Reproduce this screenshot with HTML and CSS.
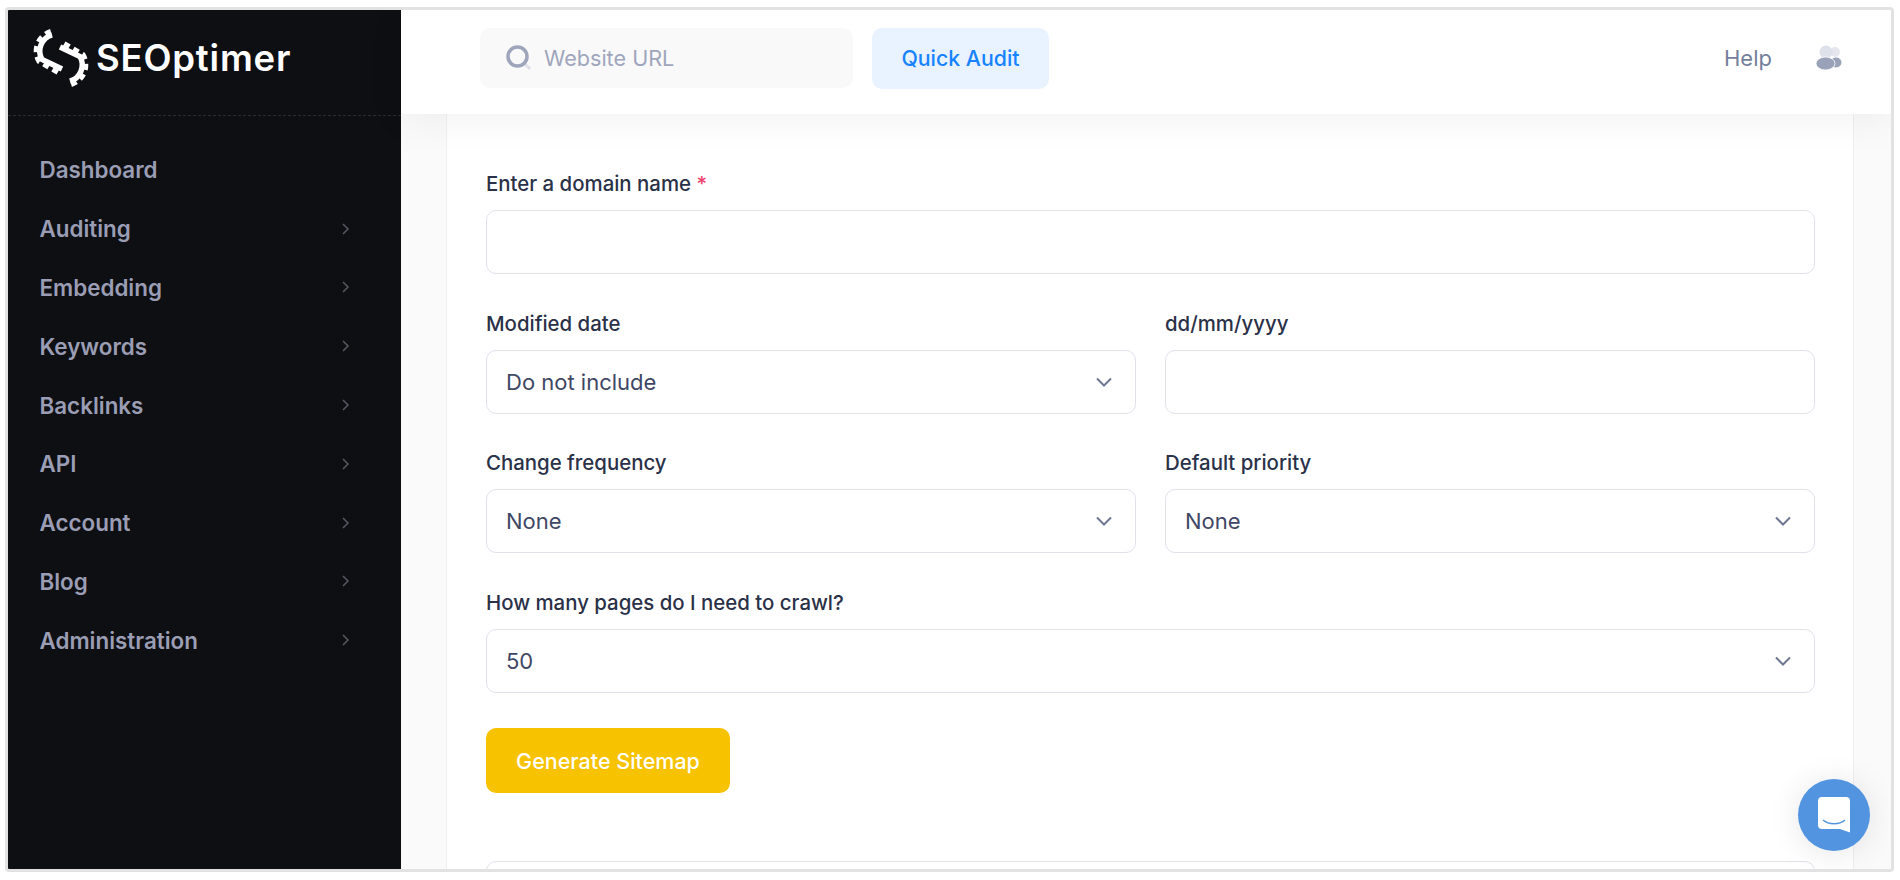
FILE: index.html
```html
<!DOCTYPE html>
<html lang="en">
<head>
<meta charset="utf-8">
<title>SEOptimer - Generate Sitemap</title>
<link rel="stylesheet" href="styles.css">
</head>
<body>
<div class="frame">
  <aside class="sidebar">
    <div class="brand">
      <svg class="brand-icon" viewBox="33 29 56 58" aria-hidden="true">
        <g>
          <path class="gear-body" d="M52 34.800A17 17 0 0 0 42 59.500L62 69"/>
          <path class="gear-teeth" d="M50.800 31.500A20.500 20.500 0 0 0 39 61.500L58 72.500"/>
        </g>
        <g transform="rotate(180 61 58)">
          <path class="gear-body" d="M52 34.800A17 17 0 0 0 42 59.500L62 69"/>
          <path class="gear-teeth" d="M50.800 31.500A20.500 20.500 0 0 0 39 61.500L58 72.500"/>
        </g>
      </svg>
      <span class="brand-name">SEOptimer</span>
    </div>
    <nav class="nav">
      <a class="nav-item">Dashboard</a>
      <a class="nav-item">Auditing<svg class="nav-chev" viewBox="0 0 10 14"><path d="M2 2l5 5-5 5"/></svg></a>
      <a class="nav-item">Embedding<svg class="nav-chev" viewBox="0 0 10 14"><path d="M2 2l5 5-5 5"/></svg></a>
      <a class="nav-item">Keywords<svg class="nav-chev" viewBox="0 0 10 14"><path d="M2 2l5 5-5 5"/></svg></a>
      <a class="nav-item">Backlinks<svg class="nav-chev" viewBox="0 0 10 14"><path d="M2 2l5 5-5 5"/></svg></a>
      <a class="nav-item">API<svg class="nav-chev" viewBox="0 0 10 14"><path d="M2 2l5 5-5 5"/></svg></a>
      <a class="nav-item">Account<svg class="nav-chev" viewBox="0 0 10 14"><path d="M2 2l5 5-5 5"/></svg></a>
      <a class="nav-item">Blog<svg class="nav-chev" viewBox="0 0 10 14"><path d="M2 2l5 5-5 5"/></svg></a>
      <a class="nav-item">Administration<svg class="nav-chev" viewBox="0 0 10 14"><path d="M2 2l5 5-5 5"/></svg></a>
    </nav>
  </aside>
  <div class="main">
    <header class="topbar">
      <div class="search">
        <svg class="search-icon" viewBox="0 0 26 26" aria-hidden="true">
          <path class="search-handle" d="M18 18l6 6"/>
          <circle class="search-ring" cx="11.5" cy="11.5" r="9.5"/>
        </svg>
        <span class="search-text">Website URL</span>
      </div>
      <button class="audit-btn">Quick Audit</button>
      <div class="topbar-right">
        <span class="help">Help</span>
        <svg class="user-icon" viewBox="0 0 26 26" aria-hidden="true">
          <circle class="user-back" cx="19" cy="7" r="5"/>
          <ellipse class="user-back-2" cx="20" cy="17.500" rx="5.500" ry="5"/>
          <circle class="user-head" cx="10" cy="7" r="6.500"/>
          <ellipse class="user-body" cx="9.500" cy="18.500" rx="9.500" ry="6.500"/>
        </svg>
      </div>
    </header>
    <div class="content">
      <section class="card">
        <div class="field">
          <label class="label">Enter a domain name <span class="req">*</span></label>
          <input class="control" type="text">
        </div>
        <div class="grid">
          <div class="field">
            <label class="label">Modified date</label>
            <div class="select-wrap">
              <select class="control select"><option>Do not include</option></select>
              <svg class="select-chev" viewBox="0 0 18 10"><path d="M2 1.5l7 7 7-7"/></svg>
            </div>
          </div>
          <div class="field">
            <label class="label">dd/mm/yyyy</label>
            <input class="control" type="text">
          </div>
          <div class="field">
            <label class="label">Change frequency</label>
            <div class="select-wrap">
              <select class="control select"><option>None</option></select>
              <svg class="select-chev" viewBox="0 0 18 10"><path d="M2 1.5l7 7 7-7"/></svg>
            </div>
          </div>
          <div class="field">
            <label class="label">Default priority</label>
            <div class="select-wrap">
              <select class="control select"><option>None</option></select>
              <svg class="select-chev" viewBox="0 0 18 10"><path d="M2 1.5l7 7 7-7"/></svg>
            </div>
          </div>
        </div>
        <div class="field">
          <label class="label">How many pages do I need to crawl?</label>
          <div class="select-wrap">
            <select class="control select"><option>50</option></select>
            <svg class="select-chev" viewBox="0 0 18 10"><path d="M2 1.5l7 7 7-7"/></svg>
          </div>
        </div>
        <button class="generate">Generate Sitemap</button>
        <div class="control result"></div>
      </section>
    </div>
    <button class="chat" aria-label="Chat">
      <svg class="chat-icon" viewBox="0 0 32 36">
        <path class="chat-bubble" d="M4 0H28a4 4 0 0 1 4 4V35.500L22 32H4a4 4 0 0 1-4-4V4a4 4 0 0 1 4-4z"/>
        <path class="chat-smile" d="M5 23c6 5 16 5 22 0"/>
      </svg>
    </button>
  </div>
</div>
</body>
</html>
```
FILE: styles.css
```css
* { box-sizing: border-box; }
html, body { margin: 0; height: 100%; background: #fff; overflow: hidden; }
body { padding: 7px 6px 8px 5px; font-family: Inter, "Liberation Sans", sans-serif; }

.frame {
  position: relative;
  display: flex;
  height: 865px;
  border: 3px solid #e2e2e2;
  border-radius: 4px;
  overflow: hidden;
}

.sidebar { flex: 0 0 393px; background: #0e0f13; }
.brand {
  display: flex;
  align-items: center;
  gap: 7px;
  height: 106px;
  padding: 0 0 9px 25px;
  border-bottom: 1px dashed #2a2c30;
}
.brand-icon { width: 56px; height: 58px; flex: none; }
.gear-body { fill: none; stroke: #fff; stroke-width: 5.500; }
.gear-teeth { fill: none; stroke: #fff; stroke-width: 5; stroke-dasharray: 6 4.500; }
.brand-name { font-size: 36.500px; font-weight: 600; color: #fff; letter-spacing: 0.8px; }

.nav { display: flex; flex-direction: column; padding-top: 24.500px; }
.nav-item {
  display: flex;
  align-items: center;
  justify-content: space-between;
  height: 58.800px;
  padding: 0 50px 0 31.500px;
  color: #9a9db4;
  font-size: 22.400px;
  font-weight: 600;
}
.nav-chev { width: 10px; height: 14px; }
.nav-chev path { fill: none; stroke: #55575f; stroke-width: 1.600; }

.main { position: relative; flex: 1; display: flex; flex-direction: column; min-width: 0; }
.topbar {
  position: relative;
  z-index: 1;
  flex: 0 0 104px;
  display: flex;
  align-items: center;
  gap: 19px;
  padding: 0 49px 8px 79px;
  background: #fff;
  box-shadow: 0 8px 40px rgba(0, 0, 0, 0.05);
}
.search {
  display: flex;
  align-items: center;
  gap: 12px;
  width: 373px;
  height: 60px;
  padding-left: 26px;
  background: #f9f9f9;
  border-radius: 10px;
}
.search-icon { width: 26px; height: 26px; flex: none; }
.search-ring { fill: none; stroke: #9fa6bc; stroke-width: 3.500; }
.search-handle { fill: none; stroke: #dfe1e9; stroke-width: 3; }
.search-text { color: #9fa6bc; font-size: 21.600px; }
.audit-btn {
  width: 177px;
  height: 61px;
  border: 0;
  border-radius: 10px;
  background: #e8f3ff;
  color: #1783ff;
  font: 500 21.300px Inter, sans-serif;
}
.topbar-right { display: flex; align-items: center; gap: 44px; margin-left: auto; }
.help { color: #757f9b; font-size: 22px; }
.user-icon { width: 26px; height: 26px; }
.user-back { fill: #e4e6ee; }
.user-head { fill: #dfe1ea; }
.user-back-2, .user-body { fill: #9aa2b9; }
.user-body { stroke: #fff; stroke-width: 0.800; }

.content { flex: 1; min-height: 0; overflow: hidden; padding: 0 37px 0 45px; background: #fafafa; }
.card {
  display: flex;
  flex-direction: column;
  gap: 38.670px;
  height: 100%;
  padding: 59px 38px 0 39px;
  background: #fff;
  border: solid #f0f0f3;
  border-width: 0 1px;
}
.field { display: flex; flex-direction: column; flex: none; min-width: 0; }
.grid { display: grid; grid-template-columns: 1fr 1fr; gap: 38.670px 29px; flex: none; }
.label { height: 22px; margin-bottom: 15px; color: #2a3148; font-size: 20.400px; font-weight: 500; line-height: 22px; }
.req { color: #f1416c; }
.control {
  display: block;
  width: 100%;
  height: 64px;
  flex: none;
  padding: 0 19px;
  border: 1px solid #dfe2ec;
  border-radius: 10px;
  background: #fff;
  color: #3f4765;
  font: 400 22px Inter, sans-serif;
  outline: none;
}
.select { appearance: none; -webkit-appearance: none; }
.select-wrap { position: relative; }
.select-chev { position: absolute; top: 27px; right: 23px; width: 18px; height: 10px; pointer-events: none; }
.select-chev path { fill: none; stroke: #6f7792; stroke-width: 2; }

.generate {
  flex: none;
  align-self: flex-start;
  width: 244px;
  height: 65px;
  margin-top: -4px;
  padding: 2px 0 0;
  border: 0;
  border-radius: 10px;
  background: #f7c200;
  color: #fff;
  font: 500 21.500px Inter, sans-serif;
}
.result { margin-top: 30px; }

.chat {
  position: absolute;
  right: 21px;
  bottom: 18px;
  z-index: 2;
  display: flex;
  align-items: center;
  justify-content: center;
  width: 72px;
  height: 72px;
  padding: 0;
  border: 0;
  border-radius: 50%;
  background: #5294e0;
  box-shadow: 0 2px 32px rgba(0, 0, 0, 0.1);
}
.chat-icon { width: 32px; height: 36px; }
.chat-bubble { fill: #fff; }
.chat-smile { fill: none; stroke: #5294e0; stroke-width: 1.500; }
```
